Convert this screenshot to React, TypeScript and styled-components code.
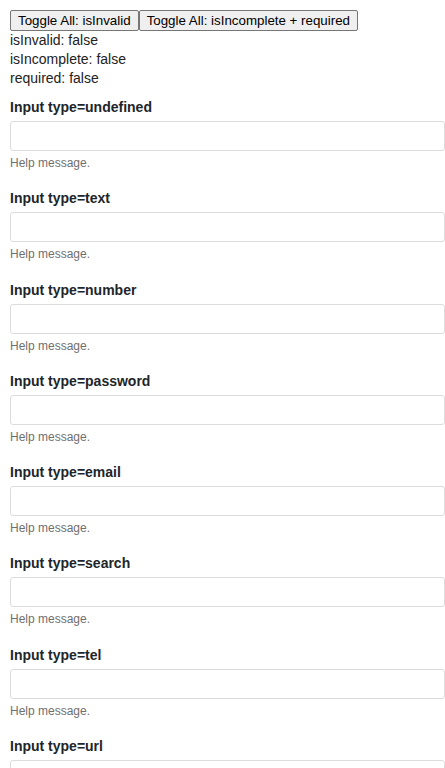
import React, { useState } from 'react'
import styled, { createGlobalStyle } from 'styled-components'

const GlobalStyle = createGlobalStyle`
  body {
    margin: 10px 0 10px 10px;
    font-family: "Liberation Sans", Arial, sans-serif;
    color: #212529;
    background: #fff;
  }
`

const Page = styled.div`
  width: 100%;
`

const Toolbar = styled.div`
  display: flex;
`

const ToggleButton = styled.button`
  font-family: "Liberation Sans", Arial, sans-serif;
  font-size: 13.333px;
  color: #000;
  background: #efefef;
  border: 1px solid #767676;
  border-radius: 2px;
  padding: 1px 7px;
  height: 21px;
  line-height: 17px;
  margin: 0;
`

const Status = styled.div`
  font-size: 14px;
  line-height: 19px;
  color: #222;
  margin-bottom: 9px;
`

const Field = styled.div`
  display: flex;
  flex-direction: column;
  margin-bottom: 17.3px;
`

const Label = styled.label`
  font-size: 14px;
  font-weight: bold;
  line-height: 20px;
  margin-bottom: 4px;
`

const Input = styled.input<{ $invalid: boolean }>`
  box-sizing: border-box;
  width: 100%;
  height: 30px;
  border: 1px solid ${({ $invalid }) => ($invalid ? '#d9534f' : '#dcdcdc')};
  border-radius: 3px;
  padding: 4px 8px;
  font-size: 14px;
  font-family: inherit;
  outline: none;
  margin: 0;
`

const Help = styled.div`
  font-size: 12px;
  line-height: 16px;
  color: #6f6f6f;
  margin-top: 4px;
`

const types = ['undefined', 'text', 'number', 'password', 'email', 'search', 'tel', 'url']

export default function App() {
  const [isInvalid, setInvalid] = useState(false)
  const [isIncomplete, setIncomplete] = useState(false)

  return (
    <Page>
      <GlobalStyle />
      <Toolbar>
        <ToggleButton onClick={() => setInvalid(!isInvalid)}>Toggle All: isInvalid</ToggleButton>
        <ToggleButton onClick={() => setIncomplete(!isIncomplete)}>
          Toggle All: isIncomplete + required
        </ToggleButton>
      </Toolbar>
      <Status>
        <div>isInvalid: {String(isInvalid)}</div>
        <div>isIncomplete: {String(isIncomplete)}</div>
        <div>required: {String(isIncomplete)}</div>
      </Status>
      {types.map((t) => (
        <Field key={t}>
          <Label>Input type={t}</Label>
          <Input
            type={t === 'undefined' ? undefined : t}
            $invalid={isInvalid}
            required={isIncomplete}
          />
          <Help>Help message.</Help>
        </Field>
      ))}
    </Page>
  )
}
